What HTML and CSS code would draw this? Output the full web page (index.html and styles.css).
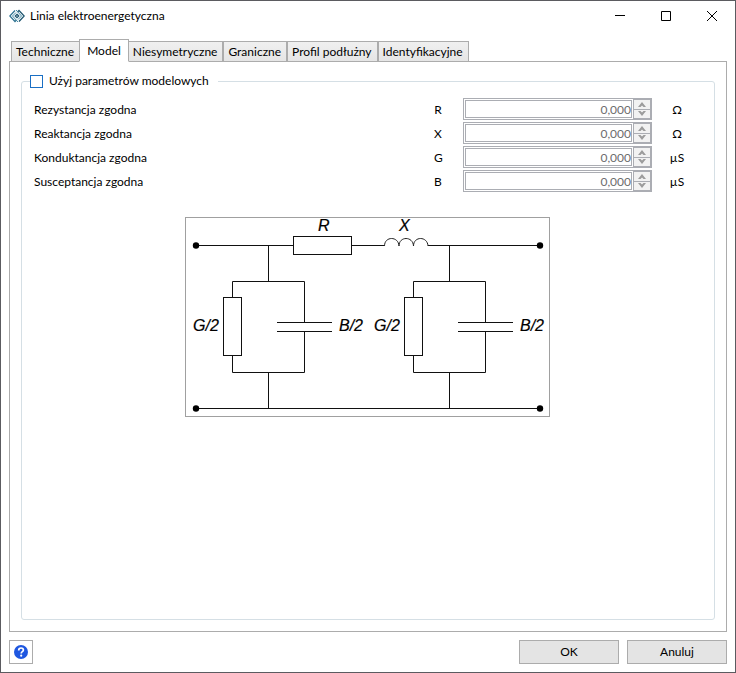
FILE: index.html
```html
<!DOCTYPE html>
<html lang="pl">
<head>
<meta charset="utf-8">
<title>Linia elektroenergetyczna</title>
<link rel="stylesheet" href="styles.css">
</head>
<body>
<div class="window">
  <header class="titlebar">
    <svg class="app-icon" width="16" height="14" viewBox="0 0 16 14" fill="none" stroke="#1f566f" stroke-width="1.300">
      <path d="M6 1.500.8 7 6 12.500l1.500-1.500" stroke="#2f7391"/>
      <path d="M8.500 3 10 1.500 15.200 7 10 12.500"/>
      <path d="M7 1l5.500 6L9 10.500M9 13 3.500 7 7 3.500" stroke="#4189a5" stroke-width="1"/>
      <path d="M8 5.300 9.700 7 8 8.700 6.300 7z"/>
    </svg>
    <h1 class="title">Linia elektroenergetyczna</h1>
    <div class="window-controls">
      <button type="button" aria-label="Minimalizuj"><svg width="10" height="10" viewBox="0 0 10 10"><path d="M0 4.500h10" stroke="#000"/></svg></button>
      <button type="button" aria-label="Maksymalizuj"><svg width="10" height="10" viewBox="0 0 10 10"><path d="M.5.5h9v9h-9z" fill="none" stroke="#000"/></svg></button>
      <button type="button" aria-label="Zamknij"><svg width="10" height="10" viewBox="0 0 10 10"><path d="M0 0l10 10M10 0 0 10" stroke="#000"/></svg></button>
    </div>
  </header>

  <main class="content">
    <div class="tabs" role="tablist">
      <button type="button" class="tab" role="tab">Techniczne</button>
      <button type="button" class="tab tab-selected" role="tab" aria-selected="true">Model</button>
      <button type="button" class="tab" role="tab">Niesymetryczne</button>
      <button type="button" class="tab" role="tab">Graniczne</button>
      <button type="button" class="tab" role="tab">Profil podłużny</button>
      <button type="button" class="tab" role="tab">Identyfikacyjne</button>
    </div>

    <div class="panel" role="tabpanel">
      <fieldset class="group">
        <legend class="group-title"><label><input type="checkbox">Użyj parametrów modelowych</label></legend>
        <div class="row">
          <label for="r">Rezystancja zgodna</label><span class="symbol">R</span>
          <div class="spinner"><input id="r" type="text" value="0,000" disabled><div class="steps"><button type="button" disabled aria-label="Więcej"><svg width="8" height="5" viewBox="0 0 8 5"><path d="M0 5 4 0l4 5H5.500L4 3.500 2.500 5z"/></svg></button><button type="button" disabled aria-label="Mniej"><svg width="8" height="5" viewBox="0 0 8 5"><path d="M0 0l4 5 4-5H5.500L4 1.500 2.500 0z"/></svg></button></div></div>
          <span class="unit">Ω</span>
        </div>
        <div class="row">
          <label for="x">Reaktancja zgodna</label><span class="symbol">X</span>
          <div class="spinner"><input id="x" type="text" value="0,000" disabled><div class="steps"><button type="button" disabled aria-label="Więcej"><svg width="8" height="5" viewBox="0 0 8 5"><path d="M0 5 4 0l4 5H5.500L4 3.500 2.500 5z"/></svg></button><button type="button" disabled aria-label="Mniej"><svg width="8" height="5" viewBox="0 0 8 5"><path d="M0 0l4 5 4-5H5.500L4 1.500 2.500 0z"/></svg></button></div></div>
          <span class="unit">Ω</span>
        </div>
        <div class="row">
          <label for="g">Konduktancja zgodna</label><span class="symbol">G</span>
          <div class="spinner"><input id="g" type="text" value="0,000" disabled><div class="steps"><button type="button" disabled aria-label="Więcej"><svg width="8" height="5" viewBox="0 0 8 5"><path d="M0 5 4 0l4 5H5.500L4 3.500 2.500 5z"/></svg></button><button type="button" disabled aria-label="Mniej"><svg width="8" height="5" viewBox="0 0 8 5"><path d="M0 0l4 5 4-5H5.500L4 1.500 2.500 0z"/></svg></button></div></div>
          <span class="unit">µS</span>
        </div>
        <div class="row">
          <label for="b">Susceptancja zgodna</label><span class="symbol">B</span>
          <div class="spinner"><input id="b" type="text" value="0,000" disabled><div class="steps"><button type="button" disabled aria-label="Więcej"><svg width="8" height="5" viewBox="0 0 8 5"><path d="M0 5 4 0l4 5H5.500L4 3.500 2.500 5z"/></svg></button><button type="button" disabled aria-label="Mniej"><svg width="8" height="5" viewBox="0 0 8 5"><path d="M0 0l4 5 4-5H5.500L4 1.500 2.500 0z"/></svg></button></div></div>
          <span class="unit">µS</span>
        </div>

        <svg class="diagram" width="366" height="200" viewBox="0 0 366 200" fill="none" stroke="#111">
          <rect x=".5" y=".5" width="364" height="199" stroke="#a0a0a0"/>
          <path d="M11 28.500h97M167 28.500h32M243 28.500h112M11 191.500h344"/>
          <rect x="108.500" y="19.500" width="58" height="18"/>
          <path d="M199.500 29c0-10 14-10 14.500 0c0-10 14-10 14.500 0c0-10 14-10 14.500 0" stroke="#222"/>
          <g id="branch">
            <path d="M83.500 28v36M47.500 80V64.500h72V105M92 105.500h55M92 114.500h55M119.500 115v40.500h-72V139M83.500 155v36"/>
            <rect x="38.500" y="80.500" width="18" height="58"/>
          </g>
          <use href="#branch" x="181"/>
          <g fill="#000" stroke="none">
            <circle cx="11" cy="28.500" r="3.200"/><circle cx="355" cy="28.500" r="3.200"/>
            <circle cx="11" cy="191.500" r="3.200"/><circle cx="355" cy="191.500" r="3.200"/>
          </g>
          <g class="diagram-text">
            <text x="133" y="14">R</text><text x="214" y="14">X</text>
            <text x="8" y="114">G/2</text><text x="154" y="114">B/2</text>
            <text x="189" y="114">G/2</text><text x="335" y="114">B/2</text>
          </g>
        </svg>
      </fieldset>
    </div>
  </main>

  <footer class="footer">
    <button type="button" class="help" aria-label="Pomoc"><svg width="14" height="14" viewBox="0 0 14 14"><circle cx="7" cy="7" r="7" fill="#1f57e0"/><path d="M4.700 5.400C4.700 2.200 9.400 2.300 9.400 5c0 1.700-2.200 1.700-2.200 3.500" fill="none" stroke="#fff" stroke-width="1.700"/><circle cx="7.200" cy="10.700" r="1.100" fill="#fff"/></svg></button>
    <button type="button" class="action">OK</button>
    <button type="button" class="action">Anuluj</button>
  </footer>
</div>
</body>
</html>
```
FILE: styles.css
```css
* { box-sizing: border-box; }
body {
  margin: 0;
  background: #fff;
  color: #000;
  font: 12px/16px Lato, "Open Sans", sans-serif;
}
button, input { font: inherit; color: inherit; margin: 0; }
button { padding: 0; }
svg { display: block; }

.window {
  display: flex;
  flex-direction: column;
  min-height: 100vh;
  border: 1px solid #5b5b60;
}
.titlebar {
  display: flex;
  align-items: center;
  height: 29px;
  padding-left: 8px;
}
.title { margin: 0 0 0 5px; font-size: 12px; font-weight: 400; }
.window-controls { display: flex; margin-left: auto; }
.window-controls button {
  display: grid;
  place-items: center;
  width: 46px;
  height: 29px;
  border: 0;
  background: none;
}

.content {
  flex: 1;
  display: flex;
  flex-direction: column;
  padding: 9px 8px 0;
}
.tabs {
  display: flex;
  align-items: flex-end;
  padding-left: 2px;
  margin-bottom: -1px;
}
.tab {
  height: 21px;
  padding: 0 5px 0 4px;
  border: 1px solid #acacac;
  background: linear-gradient(#f0f0f0, #e5e5e5);
  white-space: nowrap;
}
.tab-selected {
  z-index: 1;
  height: 23px;
  margin: 0 -1px;
  padding: 0 7px;
  border-bottom-color: #fff;
  background: #fff;
}
.panel {
  flex: 1;
  display: flex;
  padding: 11px;
  border: 1px solid #acacac;
}
.group {
  flex: 1;
  min-width: 0;
  margin: 0;
  padding: 8px 12px;
  border: 1px solid #d5dfe5;
  border-radius: 3px;
}
.group-title { margin-left: -4px; padding: 0 9px 0 0; }
.group-title label { display: flex; align-items: center; gap: 6px; }
.group-title input {
  appearance: none;
  width: 13px;
  height: 13px;
  border: 1px solid #1a6fc4;
  background: #fff;
}
.row {
  display: grid;
  grid-template-columns: 1fr 29px 189px 50px;
  align-items: center;
  height: 24px;
}
.row label, .symbol, .unit { padding-top: 2px; }
.symbol { width: 8px; text-align: center; }
.unit { text-align: center; }
.spinner {
  display: flex;
  height: 22px;
  padding: 1px;
  border: 1px solid #abadb3;
}
.spinner input {
  flex: 1;
  min-width: 0;
  padding: 2px 0 0;
  border: 1px solid #abadb3;
  background: #fff;
  color: #6d6d6d;
  text-align: right;
}
.steps {
  display: flex;
  flex-direction: column;
  width: 18px;
  margin: -1px -1px -1px 1px;
  border: 1px solid #abadb3;
}
.steps button {
  flex: 1;
  display: grid;
  place-items: center;
  border: 0;
  background: #f2f2f2;
  fill: #9c9c9c;
}
.steps button + button { border-top: 1px solid #abadb3; }
.diagram { margin: 24px auto 0; }
.diagram-text {
  fill: #000;
  stroke: #000;
  stroke-width: 0.2px;
  font: italic 16px "Liberation Sans", sans-serif;
}

.footer {
  display: flex;
  align-items: center;
  gap: 8px;
  padding: 8px;
}
.footer button { height: 24px; border: 1px solid #acacac; }
.help {
  display: grid;
  place-items: center;
  width: 24px;
  margin-right: auto;
  background: #fff;
}
.action { width: 100px; background: #e4e4e4; }
```
